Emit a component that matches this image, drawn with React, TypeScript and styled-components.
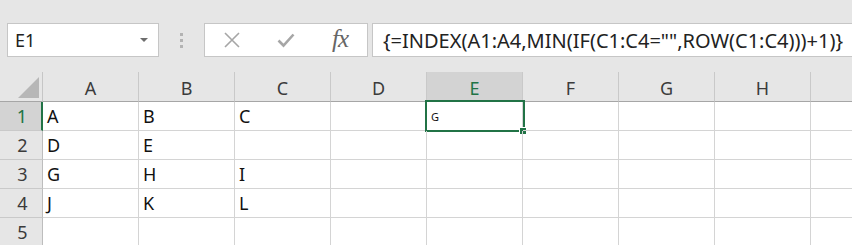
import React from "react";
import styled, { createGlobalStyle } from "styled-components";

const GlobalStyle = createGlobalStyle`
	html, body {
		margin: 0;
		padding: 0;
		background: #ffffff;
		overflow: hidden;
	}
	body {
		font-family: "Noto Sans", "Open Sans", sans-serif;
	}
`;

const GREEN = "#217346";
const COLS = ["A", "B", "C", "D", "E", "F", "G", "H"];
const DATA: string[][] = [
	["A", "B", "C"],
	["D", "E", ""],
	["G", "H", "I"],
	["J", "K", "L"],
	["", "", ""],
];

const Window = styled.div`
	width: 852px;
	height: 245px;
	overflow: hidden;
	background: #e6e6e6;
`;

const FormulaBar = styled.div`
	height: 72px;
	box-sizing: border-box;
	padding: 23px 0 0 7px;
	display: flex;
	align-items: flex-start;
	overflow: hidden;
`;

const Box = styled.div<{ $width: number }>`
	width: ${(p) => p.$width}px;
	height: 34px;
	box-sizing: border-box;
	background: #ffffff;
	border: 1px solid #c6c6c6;
	display: flex;
	align-items: center;
	flex-shrink: 0;
`;

const NameText = styled.span`
	flex: 1;
	padding-left: 7px;
	font-size: 18px;
	color: #222;
`;

const Caret = styled.span`
	width: 0;
	height: 0;
	margin-right: 10px;
	border-left: 4px solid transparent;
	border-right: 4px solid transparent;
	border-top: 4px solid #6d6d6d;
`;

const Grip = styled.div`
	width: 45px;
	height: 34px;
	flex-shrink: 0;
	display: flex;
	flex-direction: column;
	align-items: center;
	justify-content: center;
	gap: 3px;
	& i {
		width: 3px;
		height: 3px;
		background: #b3b3b3;
	}
`;

const IconButton = styled.span`
	width: 54px;
	display: flex;
	align-items: center;
	justify-content: center;
`;

const Fx = styled.span`
	font-family: "Liberation Serif", "DejaVu Serif", serif;
	font-style: italic;
	font-size: 25px;
	line-height: 1;
	color: #666666;
	letter-spacing: -1px;
	margin-top: -3px;
`;

const FormulaText = styled.span`
	padding-left: 10px;
	font-size: 20px;
	color: #222;
	white-space: nowrap;
`;

const Sheet = styled.div`
	display: grid;
	grid-template-columns: 43px repeat(9, 96px);
	grid-template-rows: 30px repeat(5, 29px);
	background: #ffffff;
`;

const Corner = styled.div`
	background: #e6e6e6;
	border-right: 1px solid #c6c6c6;
	border-bottom: 1px solid #a6a6a6;
	position: relative;
	&::after {
		content: "";
		position: absolute;
		right: 3px;
		bottom: 3px;
		border-left: 21px solid transparent;
		border-bottom: 21px solid #b7b7b7;
	}
`;

const ColHead = styled.div<{ $active?: boolean }>`
	box-sizing: border-box;
	background: ${(p) => (p.$active ? "#d3d3d3" : "#e6e6e6")};
	border-right: 1px solid #c9c9c9;
	border-bottom: 1px solid ${(p) => (p.$active ? GREEN : "#a6a6a6")};
	color: ${(p) => (p.$active ? GREEN : "#3b3b3b")};
	font-size: 18px;
	display: flex;
	align-items: center;
	justify-content: center;
	padding-top: 2px;
`;

const RowHead = styled.div<{ $active?: boolean }>`
	box-sizing: border-box;
	background: ${(p) => (p.$active ? "#d3d3d3" : "#e6e6e6")};
	border-right: ${(p) => (p.$active ? `2px solid ${GREEN}` : "1px solid #bdbdbd")};
	border-bottom: 1px solid #c9c9c9;
	color: ${(p) => (p.$active ? GREEN : "#3b3b3b")};
	font-size: 18px;
	display: flex;
	align-items: center;
	justify-content: center;
	padding-left: 3px;
`;

const Cell = styled.div`
	position: relative;
	box-sizing: border-box;
	border-right: 1px solid #d4d4d4;
	border-bottom: 1px solid #d4d4d4;
	padding-left: 4px;
	font-size: 18px;
	color: #111;
	display: flex;
	align-items: center;
`;

const SmallValue = styled.span`
	font-size: 11px;
	color: #111;
`;

const Selection = styled.div`
	position: absolute;
	left: -2px;
	top: -2px;
	width: 100px;
	height: 32px;
	box-sizing: border-box;
	border: 2px solid ${GREEN};
	pointer-events: none;
	&::after {
		content: "";
		position: absolute;
		right: -3px;
		bottom: -4px;
		width: 6px;
		height: 6px;
		background: ${GREEN};
		border: 1px solid #fff;
		border-width: 1px 0 0 1px;
	}
`;

const CrossIcon = () => (
	<svg width="18" height="18" viewBox="0 0 18 18">
		<path d="M2 2 L16 16 M16 2 L2 16" stroke="#a6a6a6" strokeWidth="1.6" fill="none" />
	</svg>
);

const CheckIcon = () => (
	<svg width="18" height="16" viewBox="0 0 18 16">
		<path d="M1.5 8.5 L6.5 13.5 L16.5 2.5" stroke="#a6a6a6" strokeWidth="2.6" fill="none" />
	</svg>
);

const App = () => {
	return (
		<Window>
			<GlobalStyle />
			<FormulaBar>
				<Box $width={152}>
					<NameText>E1</NameText>
					<Caret />
				</Box>
				<Grip>
					<i />
					<i />
					<i />
				</Grip>
				<Box $width={164}>
					<IconButton>
						<CrossIcon />
					</IconButton>
					<IconButton>
						<CheckIcon />
					</IconButton>
					<IconButton>
						<Fx>fx</Fx>
					</IconButton>
				</Box>
				<Box $width={490} style={{ marginLeft: 4 }}>
					<FormulaText>{'{=INDEX(A1:A4,MIN(IF(C1:C4="",ROW(C1:C4)))+1)}'}</FormulaText>
				</Box>
			</FormulaBar>
			<Sheet>
				<Corner />
				{COLS.map((c) => (
					<ColHead key={c} $active={c === "E"}>
						{c}
					</ColHead>
				))}
				<ColHead />
				{DATA.map((row, r) => (
					<React.Fragment key={r}>
						<RowHead $active={r === 0}>{r + 1}</RowHead>
						{COLS.map((c, i) => (
							<Cell key={c}>
								{row[i] || ""}
								{r === 0 && c === "E" && (
									<>
										<SmallValue>G</SmallValue>
										<Selection />
									</>
								)}
							</Cell>
						))}
						<Cell />
					</React.Fragment>
				))}
			</Sheet>
		</Window>
	);
};

export default App;
